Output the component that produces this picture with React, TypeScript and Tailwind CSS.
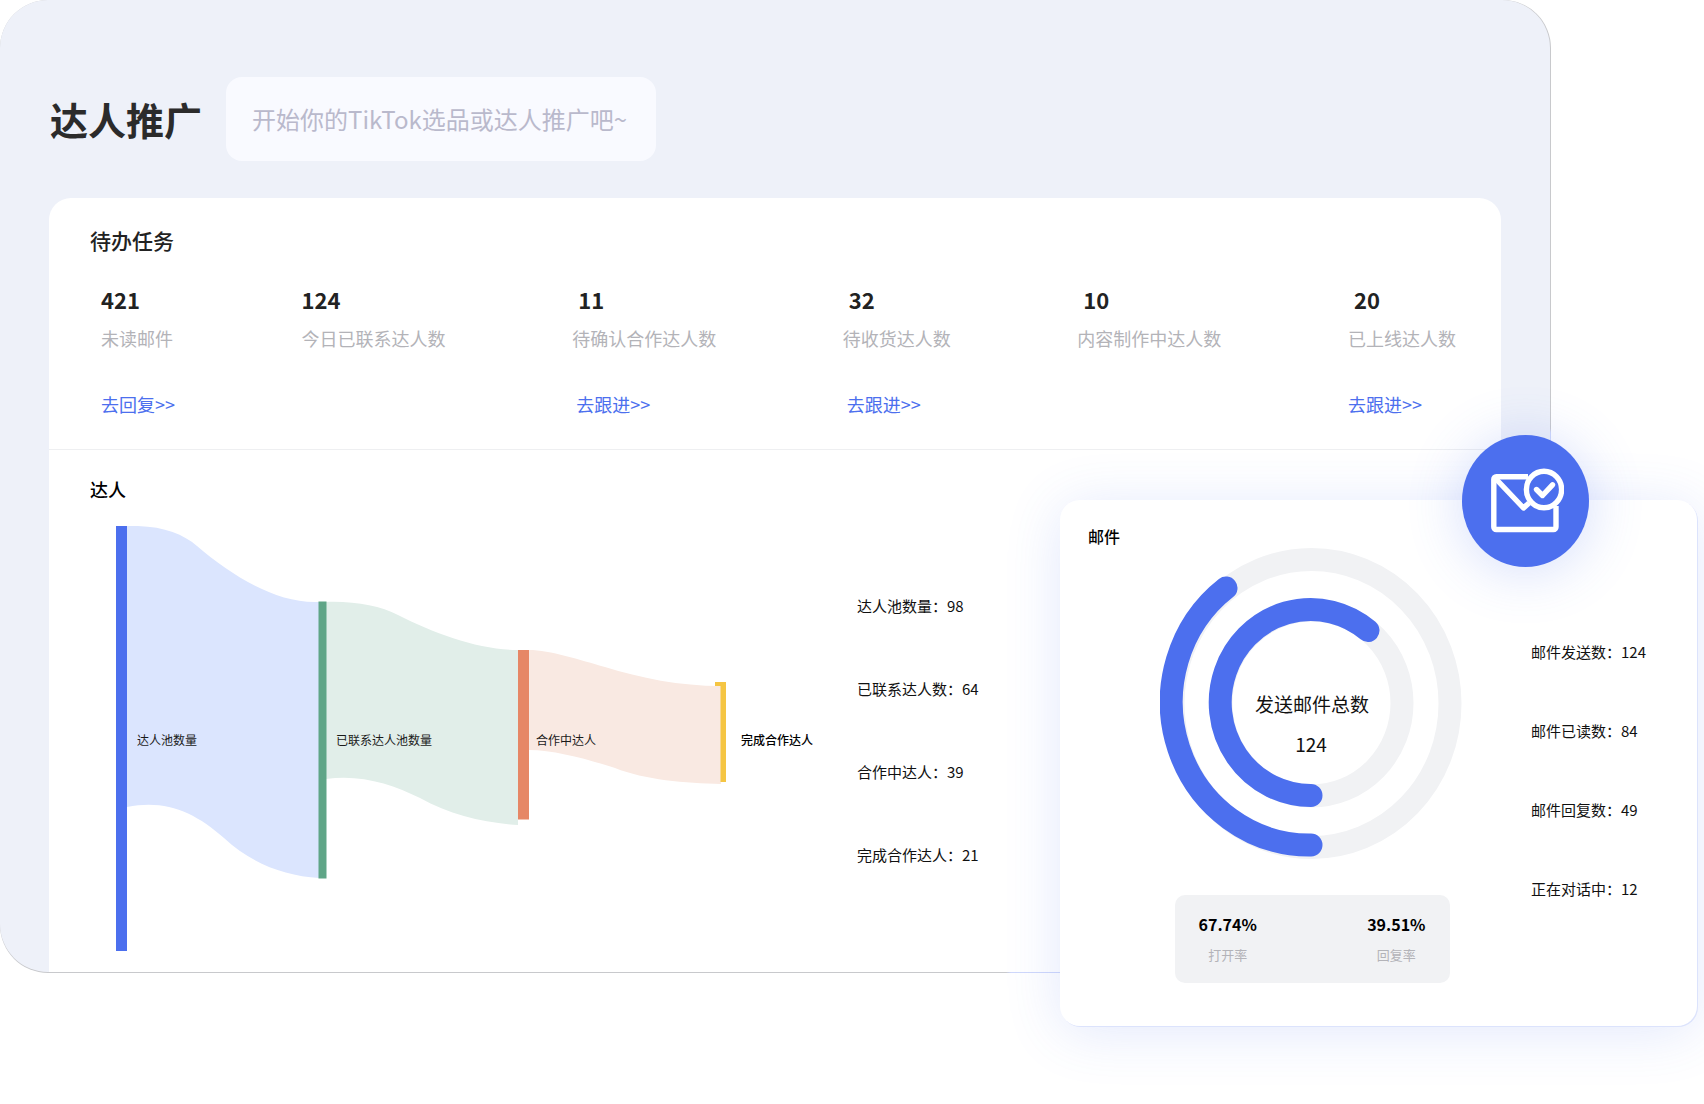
interface Task {
  count: number
  label: string
  link?: string
  indentCount?: boolean
  indentLink?: boolean
}

const tasks: Task[] = [
  { count: 421, label: '未读邮件', link: '去回复>>' },
  { count: 124, label: '今日已联系达人数' },
  { count: 11, label: '待确认合作达人数', link: '去跟进>>', indentCount: true, indentLink: true },
  { count: 32, label: '待收货达人数', link: '去跟进>>', indentCount: true, indentLink: true },
  { count: 10, label: '内容制作中达人数', indentCount: true },
  { count: 20, label: '已上线达人数', link: '去跟进>>', indentCount: true },
]

const creatorStats = [
  { label: '达人池数量', value: 98 },
  { label: '已联系达人数', value: 64 },
  { label: '合作中达人', value: 39 },
  { label: '完成合作达人', value: 21 },
]

const mailStats = [
  { label: '邮件发送数', value: 124 },
  { label: '邮件已读数', value: 84 },
  { label: '邮件回复数', value: 49 },
  { label: '正在对话中', value: 12 },
]

const rates = [
  { label: '打开率', value: '67.74%' },
  { label: '回复率', value: '39.51%' },
]

const Header = () => (
  <header className="flex items-center gap-6 pt-[77px] pb-[37px] pl-[50px]">
    <h1 className="text-[38px] leading-[48px] font-bold text-[#2b2b2b]">达人推广</h1>
    <input
      type="text"
      aria-label="搜索"
      placeholder="开始你的TikTok选品或达人推广吧~"
      className="h-[84px] w-[430px] rounded-2xl bg-[#f9faff] px-[26px] pb-0.5 text-2xl text-[#2b2b2b] outline-none placeholder:text-[#b9b9cc]"
    />
  </header>
)

const TaskSection = () => (
  <section className="border-b border-[#eeeff1] pt-7 pb-[33px]">
    <h2 className="pl-[41px] text-[21px] leading-7 font-medium text-[#222]">待办任务</h2>
    <ul className="mt-[29px] flex justify-between pr-[45px] pl-[52px]">
      {tasks.map((task) => (
        <li key={task.label}>
          <p className={`text-[22px] leading-8 font-bold text-[#222] ${task.indentCount ? 'pl-1.5' : ''}`}>
            {task.count}
          </p>
          <p className="mt-[11px] text-lg leading-6 text-[#b3b3b8]">{task.label}</p>
          {task.link && (
            <a
              href="#"
              className={`mt-[42px] block text-lg leading-6 text-[#4c6fee] ${task.indentLink ? 'pl-1' : ''}`}
            >
              {task.link}
            </a>
          )}
        </li>
      ))}
    </ul>
  </section>
)

const FunnelChart = () => (
  <svg width="700" height="425" viewBox="116 526 700 425" className="shrink-0" role="img" aria-label="达人">
    {/* flows */}
    <path
      fill="#dbe5fe"
      d="M127 526C160 525 182 533 197 546C230 574 275 604 319 602V878C285 876 252 864 224 838C195 812 165 799 127 807Z"
    />
    <path
      fill="#e1eee9"
      d="M326 602C355 601 380 606 398 615C435 634 480 650 518 650V825C485 823 450 815 420 798C392 784 360 774 326 779Z"
    />
    <path
      fill="#f9e9e2"
      d="M529 650C550 650 580 660 605 667C640 678 680 686 721 686V784C685 783 645 780 615 768C590 760 555 750 529 750Z"
    />
    {/* nodes */}
    <rect x="116" y="526" width="11" height="425" fill="#4c6fee" />
    <rect x="318.5" y="601.5" width="8" height="277" fill="#5fa587" />
    <rect x="518" y="650" width="11" height="169.5" fill="#e68766" />
    <path fill="#f5c543" d="M715 682H726V782H720.5V686H715Z" />
    <g fontSize="12" fill="#1a1a1a">
      <text x="137" y="745">达人池数量</text>
      <text x="336" y="745">已联系达人池数量</text>
      <text x="536" y="745">合作中达人</text>
      <text x="741" y="745" fontWeight="500" fill="#000">完成合作达人</text>
    </g>
  </svg>
)

const CreatorSection = () => (
  <section className="pt-[27px] pb-[21px]">
    <h2 className="pl-[41px] text-lg leading-6 font-medium text-black">达人</h2>
    <div className="mt-[25px] flex items-start gap-[41px] pl-[67px]">
      <FunnelChart />
      <ul className="flex flex-col gap-[59px] pt-[68px]">
        {creatorStats.map((s) => (
          <li key={s.label} className="text-[15px] leading-6 whitespace-nowrap text-[#111]">
            {s.label}：{s.value}
          </li>
        ))}
      </ul>
    </div>
  </section>
)

const MailRings = () => (
  <svg width="304" height="312" viewBox="1160 548 304 312" role="img" aria-label="发送邮件总数">
    <g fill="none" strokeWidth="23">
      <ellipse cx="1311.5" cy="703.5" rx="138.5" ry="144" stroke="#f1f2f4" />
      <ellipse cx="1311.5" cy="703" rx="90.5" ry="93" stroke="#f1f2f4" />
      <g stroke="#4c6fee" strokeLinecap="round">
        <path d="M1311 845A138 143 0 0 1 1226 588" />
        <path d="M1311 795.5A90.5 93 0 1 1 1368 630.5" />
      </g>
    </g>
    <g fontSize="19" fill="#111" textAnchor="middle">
      <text x="1312" y="712">发送邮件总数</text>
      <text x="1311" y="752">124</text>
    </g>
  </svg>
)

const MailBadge = () => (
  <div className="absolute -top-[65px] right-[108px] flex h-[132px] w-[127px] items-center justify-center rounded-[50%] bg-[#4c6fee] shadow-[0_4px_56px_rgba(76,111,238,0.24)]">
    <svg width="76" height="66" viewBox="0 0 76 66" fill="none" stroke="#fff" strokeWidth="5.4">
      <path
        d="M40 8.7H8.3A2.5 2.5 0 0 0 5.8 11.2V59A2.5 2.5 0 0 0 8.3 61.5H65.5A2.5 2.5 0 0 0 68 59V38"
        strokeLinejoin="round"
      />
      <path d="M8 11L35.5 40L41 35" strokeLinejoin="round" />
      <ellipse cx="56" cy="21.5" rx="17.6" ry="18.3" />
      <path d="M48.5 21.5L54.5 27.5L64.5 16.8" strokeLinecap="round" strokeLinejoin="round" />
    </svg>
  </div>
)

const MailCard = () => (
  <aside className="absolute top-[500px] right-[7px] w-[637px] rounded-[20px] bg-white pt-6 pb-[43px] shadow-[1px_1px_0_#dce3fc,0_6px_56px_rgba(76,111,238,0.16)]">
    <h2 className="pl-7 text-base leading-6 font-medium text-black">邮件</h2>
    <div className="flex items-start gap-[67px] pl-[100px]">
      <div className="flex flex-col items-center">
        <MailRings />
        <dl className="mt-[35px] flex w-[275px] justify-between rounded-[10px] bg-[#f1f2f4] px-6 pt-[17px] pb-[18px]">
          {rates.map((r) => (
            <div key={r.label} className="flex flex-col-reverse items-center gap-[9px]">
              <dt className="text-[13px] leading-5 text-[#b3b3b8]">{r.label}</dt>
              <dd className="text-base leading-6 font-bold text-black">{r.value}</dd>
            </div>
          ))}
        </dl>
      </div>
      <ul className="flex flex-col gap-[55px] pt-[92px]">
        {mailStats.map((s) => (
          <li key={s.label} className="text-[15px] leading-6 whitespace-nowrap text-[#111]">
            {s.label}：{s.value}
          </li>
        ))}
      </ul>
    </div>
    <MailBadge />
  </aside>
)

export default function App() {
  return (
    <div className="relative min-h-screen bg-white font-['Noto_Sans_CJK_SC',sans-serif]">
      {/* hairline on the right and bottom edges, bluish near the floating card */}
      <div className="mr-[153px] rounded-[48px] bg-[radial-gradient(circle_at_100%_100%,#cfd8fb_540px,#c8c9cc_545px)] pr-px pb-px">
        <main className="overflow-hidden rounded-[48px] bg-[#eef1f9]">
          <Header />
          <div className="mr-[49px] ml-[49px] rounded-t-[22px] bg-white">
            <TaskSection />
            <CreatorSection />
          </div>
        </main>
      </div>
      <MailCard />
    </div>
  )
}
